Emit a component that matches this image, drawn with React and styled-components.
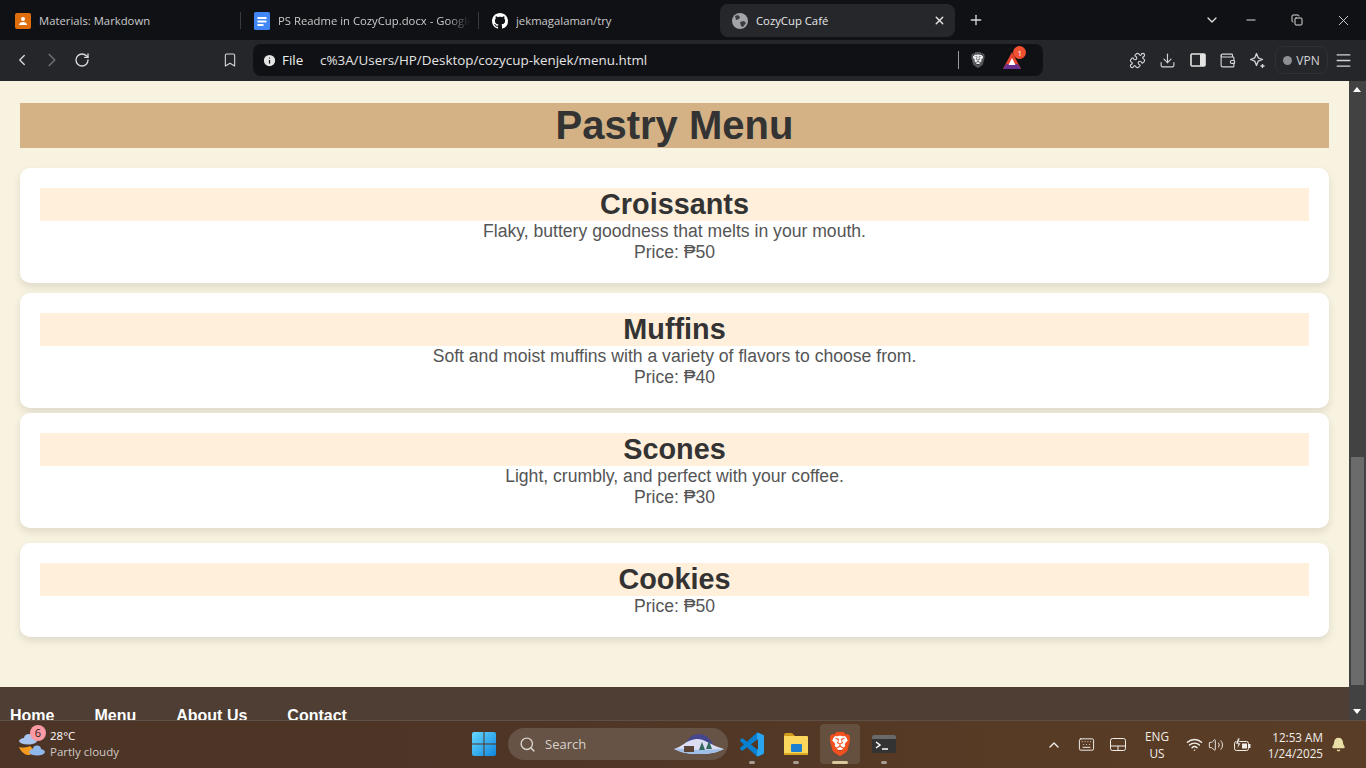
import styled, { createGlobalStyle } from "styled-components";
import {
  ChevronLeft,
  ChevronRight,
  RotateCw,
  Bookmark,
  Info,
  Puzzle,
  Download,
  Wallet,
  Menu,
  ChevronDown,
  Minus,
  Copy,
  X,
  Plus,
  Search,
  ChevronUp,
  Keyboard,
  Wifi,
  Volume2,
  Bell,
} from "lucide-react";
import { SiBrave } from "react-icons/si";

const GlobalStyle = createGlobalStyle`
  html, body {
    margin: 0;
    padding: 0;
    overflow: hidden;
    font-family: "Liberation Sans", Arial, sans-serif;
  }
  * { box-sizing: border-box; }
`;

const Screen = styled.div`
  width: 1366px;
  height: 768px;
  display: flex;
  flex-direction: column;
  overflow: hidden;
  background: #f8f2e0;
`;

const TabStrip = styled.div`
  height: 40px;
  flex: none;
  background: #101114;
  display: flex;
  align-items: center;
  font-family: "Open Sans", sans-serif;
  font-size: 11.3px;
  color: #c9cacc;
`;

const Tab = styled.div`
  width: ${(p) => p.$w}px;
  height: 33px;
  margin-top: 1px;
  display: flex;
  align-items: center;
  gap: 8px;
  padding-left: ${(p) => p.$pad}px;
  white-space: nowrap;
  overflow: hidden;
  position: relative;
  flex: none;
  ${(p) => p.$active && "background: #26272b; border-radius: 8px; color: #e8e8e8;"}
`;

const TabDivider = styled.div`
  width: 1px;
  height: 17px;
  background: #3a3b3f;
  flex: none;
`;

const TabText = styled.span`
  width: ${(p) => p.$w || "auto"};
  overflow: hidden;
  ${(p) => p.$fade && "mask-image: linear-gradient(90deg, #000 88%, transparent 100%);"}
`;

const CloseTab = styled.span`
  position: absolute;
  right: 9px;
  top: 10px;
  display: flex;
  color: #e6e6e6;
`;

const WindowButtons = styled.div`
  margin-left: auto;
  display: flex;
  align-items: center;
  color: #dcdcdc;
`;

const WindowButton = styled.div`
  width: ${(p) => p.$w || 46}px;
  display: flex;
  justify-content: center;
`;

const ToolBar = styled.div`
  height: 41px;
  flex: none;
  background: #25262a;
  display: flex;
  align-items: center;
  color: #d4d5d7;
  padding: 0 0 1px 13px;
`;

const NavIcon = styled.div`
  width: ${(p) => p.$w || 30}px;
  margin-left: ${(p) => p.$ml || 0}px;
  display: flex;
  justify-content: center;
  flex: none;
  color: ${(p) => (p.$dim ? "#6d6e71" : "#d8d9db")};
`;

const AddressBar = styled.div`
  width: 790px;
  height: 32px;
  margin-left: 14px;
  background: #101114;
  border-radius: 8px;
  display: flex;
  align-items: center;
  padding-left: 9px;
  font-family: "Open Sans", sans-serif;
  font-size: 13.4px;
  color: #e4e4e4;
  flex: none;
`;

const FileLabel = styled.span`
  margin-left: 5px;
  color: #f1f1f1;
  width: 38px;
`;

const AddressDivider = styled.div`
  width: 1px;
  height: 18px;
  background: #9a9a9a;
  margin-left: 311px;
`;

const ShieldSlot = styled.div`
  margin-left: 11px;
  display: flex;
`;

const ShieldFace = styled.div`
  display: flex;
  color: #55565b;
  background: radial-gradient(circle at 50% 42%, #eceded 0 42%, transparent 44%);
`;

const RewardSlot = styled.div`
  margin-left: 17px;
  position: relative;
  display: flex;
`;

const Badge = styled.span`
  position: absolute;
  top: -6px;
  right: -5px;
  width: 13px;
  height: 13px;
  border-radius: 50%;
  background: #f0502f;
  color: #fff;
  font-size: 8px;
  line-height: 13px;
  text-align: center;
`;

const ToolIcons = styled.div`
  margin-left: 85px;
  display: flex;
  align-items: center;
  gap: 11px;
`;

const ToolIcon = styled.div`
  display: flex;
  width: 19px;
  justify-content: center;
`;

const VpnPill = styled.div`
  height: 28px;
  width: 53px;
  border: 1px solid #303136;
  border-radius: 8px;
  display: flex;
  align-items: center;
  justify-content: center;
  gap: 4px;
  font-family: "Open Sans", sans-serif;
  font-size: 12px;
  margin: 0 -5px 0 -3px;
`;

const VpnDot = styled.span`
  width: 9px;
  height: 9px;
  border-radius: 50%;
  background: #8d8f94;
`;

const Viewport = styled.div`
  height: 639px;
  flex: none;
  display: flex;
`;

const Page = styled.div`
  width: 1349px;
  flex: none;
  display: flex;
  flex-direction: column;
  background: #f8f2e0;
  padding-top: 22px;
`;

const Main = styled.main`
  flex: 1;
  padding: 0 20px;
`;

const PageTitle = styled.h1`
  margin: 0 0 20px;
  height: 45px;
  line-height: 45px;
  background: #d4b285;
  color: #333;
  font-size: 40px;
  font-weight: bold;
  text-align: center;
`;

const Card = styled.section`
  background: #fff;
  border-radius: 10px;
  padding: 20px;
  margin-bottom: ${(p) => p.$gap}px;
  box-shadow: 0 4px 8px rgba(0, 0, 0, 0.1);
  text-align: center;
`;

const CardTitle = styled.h2`
  margin: 0;
  height: 33px;
  line-height: 33px;
  background: #ffefdb;
  color: #333;
  font-size: 28.8px;
  font-weight: bold;
`;

const CardText = styled.p`
  margin: 0;
  font-size: 17.6px;
  line-height: 21px;
  color: #555;
`;

const Footer = styled.footer`
  height: 33px;
  flex: none;
  background: #4e3e34;
  display: flex;
  gap: 40px;
  padding: 20px 10px 0;
  overflow: hidden;
`;

const FooterLink = styled.a`
  color: #fff;
  font-size: 16px;
  font-weight: bold;
  line-height: 18px;
`;

const ScrollBar = styled.div`
  width: 17px;
  flex: none;
  background: #424242;
  position: relative;
`;

const ScrollArrow = styled.span`
  position: absolute;
  left: 4px;
  ${(p) => (p.$up ? "top: 6px;" : "bottom: 6px;")}
  width: 0;
  height: 0;
  border-left: 4.5px solid transparent;
  border-right: 4.5px solid transparent;
  ${(p) => (p.$up ? "border-bottom: 5px solid #fff;" : "border-top: 5px solid #fff;")}
`;

const ScrollThumb = styled.div`
  position: absolute;
  top: 376px;
  left: 2px;
  right: 2px;
  height: 228px;
  background: #6b6b6b;
`;

const TaskBar = styled.div`
  height: 48px;
  flex: none;
  background: linear-gradient(90deg, #4c3426 0%, #4e3526 40%, #583b25 75%, #5a3d26 100%);
  border-top: 1px solid #5e5047;
  padding-bottom: 1px;
  position: relative;
  display: flex;
  align-items: center;
  color: #fff;
  font-family: "Open Sans", sans-serif;
`;

const Weather = styled.div`
  width: 472px;
  flex: none;
  display: flex;
  align-items: center;
  padding-left: 18px;
  gap: 4px;
  position: relative;
`;

const WeatherBadge = styled.span`
  position: absolute;
  left: 30px;
  top: -3px;
  width: 16px;
  height: 16px;
  border-radius: 50%;
  background: #f99aa4;
  color: #2b1a14;
  font-size: 11px;
  line-height: 16px;
  text-align: center;
`;

const WeatherText = styled.div`
  font-size: 11.5px;
  line-height: 16px;
`;

const Muted = styled.div`
  color: #d0cac5;
`;

const SearchBox = styled.div`
  width: 220px;
  height: 32px;
  margin-left: 12px;
  border-radius: 16px;
  background: #675345;
  display: flex;
  align-items: center;
  padding-left: 11px;
  gap: 9px;
  font-size: 13px;
  color: #d8d2cc;
  position: relative;
`;

const SearchArt = styled.div`
  position: absolute;
  right: 4px;
  top: 5px;
  display: flex;
`;

const PinnedRow = styled.div`
  display: flex;
  gap: 4px;
  margin-left: 4px;
`;

const Pinned = styled.div`
  width: 40px;
  height: 40px;
  display: flex;
  align-items: center;
  justify-content: center;
  position: relative;
  border-radius: 4px;
  flex: none;
  ${(p) => p.$active && "background: #65503f;"}
`;

const PinDot = styled.span`
  position: absolute;
  bottom: 0;
  left: 50%;
  transform: translateX(-50%);
  width: ${(p) => (p.$active ? 16 : 6)}px;
  height: 3px;
  border-radius: 2px;
  background: ${(p) => (p.$active ? "#d9c99d" : "#a89c92")};
`;

const BraveMark = styled.div`
  display: flex;
  color: #f4501e;
  background: radial-gradient(circle at 50% 42%, #fff 0 42%, transparent 44%);
`;

const Tray = styled.div`
  position: absolute;
  right: 13px;
  top: 0;
  bottom: 0;
  display: flex;
  align-items: center;
  color: #f1eeea;
`;

const TrayIcon = styled.div`
  display: flex;
  justify-content: center;
  width: ${(p) => p.$w}px;
`;

const LangBlock = styled.div`
  font-size: 11.8px;
  line-height: 17px;
  text-align: center;
  width: 44px;
  margin: 0 4px 0 7px;
`;

const ClockBlock = styled.div`
  font-size: 11.7px;
  line-height: 16px;
  text-align: right;
  width: 66px;
`;

const menu = [
  { name: "Croissants", lines: ["Flaky, buttery goodness that melts in your mouth.", "Price: ₱50"], gap: 10 },
  { name: "Muffins", lines: ["Soft and moist muffins with a variety of flavors to choose from.", "Price: ₱40"], gap: 5 },
  { name: "Scones", lines: ["Light, crumbly, and perfect with your coffee.", "Price: ₱30"], gap: 15 },
  { name: "Cookies", lines: ["Price: ₱50"], gap: 0 },
];

const vsCodePath =
  "M23.15 2.587L18.21.21a1.494 1.494 0 0 0-1.705.29l-9.46 8.63-4.12-3.128a.999.999 0 0 0-1.276.057L.327 7.261A1 1 0 0 0 .326 8.74L3.899 12 .326 15.26a1 1 0 0 0 .001 1.479L1.65 17.94a.999.999 0 0 0 1.276.057l4.12-3.128 9.46 8.63a1.492 1.492 0 0 0 1.704.29l4.942-2.377A1.5 1.5 0 0 0 24 20.06V3.939a1.5 1.5 0 0 0-.85-1.352zm-5.146 14.861L10.826 12l7.178-5.448v10.896z";

function MaterialsIcon() {
  return (
    <svg width="16" height="16" viewBox="0 0 16 16">
      <rect width="16" height="16" rx="2" fill="#df6d0b" />
      <circle cx="8" cy="6" r="2" fill="#fff" />
      <path d="M4 12c0-2 2-3 4-3s4 1 4 3z" fill="#fff" />
    </svg>
  );
}

function DocsIcon() {
  return (
    <svg width="16" height="18" viewBox="0 0 16 18">
      <rect width="16" height="18" rx="1.5" fill="#4285f4" />
      <path d="M3.5 6h9M3.5 9.5h9M3.5 13h6" stroke="#fff" strokeWidth="1.8" />
    </svg>
  );
}

function GithubIcon() {
  return (
    <svg width="16" height="16" viewBox="0 0 16 16" fill="#fff">
      <path d="M8 0C3.58 0 0 3.58 0 8c0 3.54 2.29 6.53 5.47 7.59.4.07.55-.17.55-.38 0-.19-.01-.82-.01-1.49-2.01.37-2.53-.49-2.69-.94-.09-.23-.48-.94-.82-1.13-.28-.15-.68-.52-.01-.53.63-.01 1.08.58 1.23.82.72 1.21 1.87.87 2.33.66.07-.52.28-.87.51-1.07-1.78-.2-3.64-.89-3.64-3.95 0-.87.31-1.59.82-2.15-.08-.2-.36-1.02.08-2.12 0 0 .67-.21 2.2.82.64-.18 1.32-.27 2-.27s1.36.09 2 .27c1.53-1.04 2.2-.82 2.2-.82.44 1.1.16 1.92.08 2.12.51.56.82 1.27.82 2.15 0 3.07-1.87 3.75-3.65 3.95.29.25.54.73.54 1.48 0 1.07-.01 1.93-.01 2.2 0 .21.15.46.55.38A8 8 0 0 0 16 8c0-4.42-3.58-8-8-8z" />
    </svg>
  );
}

function GlobeIcon() {
  return (
    <svg width="16" height="16" viewBox="0 0 16 16">
      <circle cx="8" cy="8" r="8" fill="#a3a4a7" />
      <path d="M3 3l3-1 2 2-1 2-3 1zM8 9l4-1 2 2-3 4-2-1z" fill="#3a3b3f" />
    </svg>
  );
}

function RewardIcon() {
  return (
    <svg width="18" height="17" viewBox="0 0 18 17">
      <path d="M9 0l9 17H0z" fill="#e8442e" />
      <path d="M0 17l3.5-5h11l3.5 5z" fill="#6b2f90" />
      <path d="M9 6l3.5 7h-7z" fill="#fff" />
    </svg>
  );
}

function SidebarIcon() {
  return (
    <svg width="16" height="14" viewBox="0 0 16 14">
      <rect x="1" y="1" width="14" height="12" rx="1" fill="none" stroke="#e4e4e4" strokeWidth="1.6" />
      <rect x="10" y="1" width="5" height="12" fill="#e4e4e4" />
    </svg>
  );
}

function LeoIcon() {
  return (
    <svg width="17" height="17" viewBox="0 0 17 17" fill="none" stroke="#d4d5d7" strokeWidth="1.3">
      <path d="M7.5 1.5l1.7 4.3 4.3 1.700-4.300 1.700-1.700 4.300-1.700-4.300L1.500 7.500l4.300-1.700z" strokeLinejoin="round" />
      <path d="M13.500 12v4M11.500 14h4" />
    </svg>
  );
}

function WeatherIcon() {
  return (
    <svg width="28" height="26" viewBox="0 0 28 26">
      <path d="M1 16c4 1 8 .5 11-1l3 3-3 6c-5 .5-9-3-11-8z" fill="#f39a1f" />
      <ellipse cx="10" cy="10" rx="9" ry="3.5" fill="#a9c3ee" />
      <ellipse cx="11" cy="7" rx="5" ry="4" fill="#a9c3ee" />
      <ellipse cx="19" cy="21" rx="8" ry="3.5" fill="#8fb8ec" />
      <ellipse cx="19" cy="18" rx="4" ry="3.5" fill="#8fb8ec" />
    </svg>
  );
}

function WindowsLogo() {
  return (
    <svg width="24" height="24" viewBox="0 0 24 24">
      <defs>
        <linearGradient id="winGrad" x1="0" y1="0" x2="1" y2="1">
          <stop offset="0" stopColor="#66d8ff" />
          <stop offset="1" stopColor="#0f86dd" />
        </linearGradient>
      </defs>
      <path d="M0 2a2 2 0 0 1 2-2h9.500v11.500H0zM12.500 0H22a2 2 0 0 1 2 2v9.500H12.500zM0 12.500h11.500V24H2a2 2 0 0 1-2-2zM12.500 12.500H24V22a2 2 0 0 1-2 2h-9.500z" fill="url(#winGrad)" />
    </svg>
  );
}

function MountainArt() {
  return (
    <svg width="50" height="22" viewBox="0 0 50 22">
      <path d="M10 13C14 5 19 1 25 1s11 4 15 12z" fill="#46468f" />
      <path d="M0 16c8-2 12-9 22-10 8-1 14 6 28 10-6 3-13 5-25 5S6 19 0 16z" fill="#dcdcf3" />
      <path d="M0 16c8-1 16 1 25 1s17-1 25-1c-6 3-13 5-25 5S6 19 0 16z" fill="#9ec0e8" />
      <path d="M10 13h10v6H10z" fill="#5a4234" />
      <path d="M28 9l3 8h-6zM35 8l3 8h-6z" fill="#35695c" />
    </svg>
  );
}

function VsCodeIcon() {
  return (
    <svg width="24" height="25" viewBox="0 0 24 24">
      <defs>
        <clipPath id="vsRight"><rect x="17" y="0" width="7" height="24" /></clipPath>
      </defs>
      <path d={vsCodePath} fill="#0a80d0" />
      <path d={vsCodePath} fill="#2aa5f0" clipPath="url(#vsRight)" />
    </svg>
  );
}

function FolderIcon() {
  return (
    <svg width="24" height="22" viewBox="0 0 24 22">
      <path d="M0 2a2 2 0 0 1 2-2h6l3 3v2H0z" fill="#d09a1a" />
      <rect y="3" width="24" height="19" rx="1" fill="#fbd75b" />
      <rect x="7" y="11" width="11" height="8" rx="1" fill="#1d7fd0" />
      <rect y="20" width="24" height="2" fill="#d8a820" />
    </svg>
  );
}

function TerminalIcon() {
  return (
    <svg width="24" height="18" viewBox="0 0 24 18">
      <rect width="24" height="18" rx="2" fill="#333" />
      <path d="M0 2a2 2 0 0 1 2-2h20a2 2 0 0 1 2 2v2H0z" fill="#6a6a6a" />
      <path d="M4 7l4 3-4 3" stroke="#fff" strokeWidth="1.5" fill="none" />
      <path d="M10 14h6" stroke="#fff" strokeWidth="1.5" />
    </svg>
  );
}

function TouchpadIcon() {
  return (
    <svg width="16" height="13" viewBox="0 0 16 13" fill="none" stroke="#f1eeea" strokeWidth="1">
      <rect x=".5" y=".5" width="15" height="12" rx="2" />
      <path d="M.5 8h15M8 8v4.500" />
    </svg>
  );
}

function BatteryIcon() {
  return (
    <svg width="17" height="14" viewBox="0 0 17 14">
      <rect x=".5" y="3.500" width="14" height="9" rx="2" fill="none" stroke="#f1eeea" />
      <rect x="8" y="5.500" width="5" height="5" fill="#f1eeea" />
      <rect x="15" y="6" width="1.500" height="4" fill="#f1eeea" />
      <path d="M4 0L1.500 6H4l-1 5 4-6H4.500L6 0z" fill="#f1eeea" stroke="#533824" strokeWidth=".6" />
    </svg>
  );
}

export default function App() {
  return (
    <Screen>
      <GlobalStyle />
      <TabStrip>
        <Tab $w={240} $pad={15}>
          <MaterialsIcon />
          <TabText>Materials: Markdown</TabText>
        </Tab>
        <TabDivider />
        <Tab $w={237} $pad={13}>
          <DocsIcon />
          <TabText $w="192px" $fade>PS Readme in CozyCup.docx - Google Docs</TabText>
        </Tab>
        <TabDivider />
        <Tab $w={241} $pad={13}>
          <GithubIcon />
          <TabText>jekmagalaman/try</TabText>
        </Tab>
        <Tab $w={235} $pad={12} $active>
          <GlobeIcon />
          <TabText>CozyCup Café</TabText>
          <CloseTab><X size={13} strokeWidth={2.5} /></CloseTab>
        </Tab>
        <NavIcon $w={42}><Plus size={16} /></NavIcon>
        <WindowButtons>
          <WindowButton $w={32}><ChevronDown size={16} /></WindowButton>
          <WindowButton><Minus size={14} /></WindowButton>
          <WindowButton><Copy size={12} /></WindowButton>
          <WindowButton><X size={17} strokeWidth={1.3} /></WindowButton>
        </WindowButtons>
      </TabStrip>
      <ToolBar>
        <NavIcon $w={18}><ChevronLeft size={22} strokeWidth={1.8} /></NavIcon>
        <NavIcon $w={42} $dim><ChevronRight size={22} strokeWidth={1.8} /></NavIcon>
        <NavIcon $w={18}><RotateCw size={16} strokeWidth={2} /></NavIcon>
        <NavIcon $w={18} $ml={130}><Bookmark size={16} strokeWidth={1.6} /></NavIcon>
        <AddressBar>
          <Info size={15} fill="#e4e4e4" color="#101114" />
          <FileLabel>File</FileLabel>
          <span>c%3A/Users/HP/Desktop/cozycup-kenjek/menu.html</span>
          <AddressDivider />
          <ShieldSlot><ShieldFace><SiBrave size={16} /></ShieldFace></ShieldSlot>
          <RewardSlot>
            <RewardIcon />
            <Badge>1</Badge>
          </RewardSlot>
        </AddressBar>
        <ToolIcons>
          <ToolIcon><Puzzle size={17} strokeWidth={1.6} /></ToolIcon>
          <ToolIcon><Download size={17} strokeWidth={1.6} /></ToolIcon>
          <ToolIcon><SidebarIcon /></ToolIcon>
          <ToolIcon><Wallet size={17} strokeWidth={1.6} /></ToolIcon>
          <ToolIcon><LeoIcon /></ToolIcon>
          <VpnPill><VpnDot />VPN</VpnPill>
          <ToolIcon><Menu size={19} strokeWidth={1.6} /></ToolIcon>
        </ToolIcons>
      </ToolBar>
      <Viewport>
        <Page>
          <Main>
            <PageTitle>Pastry Menu</PageTitle>
            {menu.map((item) => (
              <Card key={item.name} $gap={item.gap}>
                <CardTitle>{item.name}</CardTitle>
                {item.lines.map((line) => (
                  <CardText key={line}>{line}</CardText>
                ))}
              </Card>
            ))}
          </Main>
          <Footer>
            <FooterLink>Home</FooterLink>
            <FooterLink>Menu</FooterLink>
            <FooterLink>About Us</FooterLink>
            <FooterLink>Contact</FooterLink>
          </Footer>
        </Page>
        <ScrollBar>
          <ScrollArrow $up />
          <ScrollThumb />
          <ScrollArrow />
        </ScrollBar>
      </Viewport>
      <TaskBar>
        <Weather>
          <WeatherIcon />
          <WeatherBadge>6</WeatherBadge>
          <WeatherText>
            28°C
            <Muted>Partly cloudy</Muted>
          </WeatherText>
        </Weather>
        <WindowsLogo />
        <SearchBox>
          <Search size={17} />
          Search
          <SearchArt><MountainArt /></SearchArt>
        </SearchBox>
        <PinnedRow>
          <Pinned><VsCodeIcon /><PinDot /></Pinned>
          <Pinned><FolderIcon /><PinDot /></Pinned>
          <Pinned $active><BraveMark><SiBrave size={24} /></BraveMark><PinDot $active /></Pinned>
          <Pinned><TerminalIcon /><PinDot /></Pinned>
        </PinnedRow>
        <Tray>
          <TrayIcon $w={20}><ChevronUp size={16} /></TrayIcon>
          <TrayIcon $w={44}><Keyboard size={17} strokeWidth={1.4} /></TrayIcon>
          <TrayIcon $w={20}><TouchpadIcon /></TrayIcon>
          <LangBlock>ENG<br />US</LangBlock>
          <TrayIcon $w={22}><Wifi size={17} /></TrayIcon>
          <TrayIcon $w={22}><Volume2 size={16} strokeWidth={1.4} /></TrayIcon>
          <TrayIcon $w={30}><BatteryIcon /></TrayIcon>
          <ClockBlock>12:53 AM<br />1/24/2025</ClockBlock>
          <TrayIcon $w={30}><Bell size={15} fill="#eadfa6" color="#eadfa6" /></TrayIcon>
        </Tray>
      </TaskBar>
    </Screen>
  );
}
